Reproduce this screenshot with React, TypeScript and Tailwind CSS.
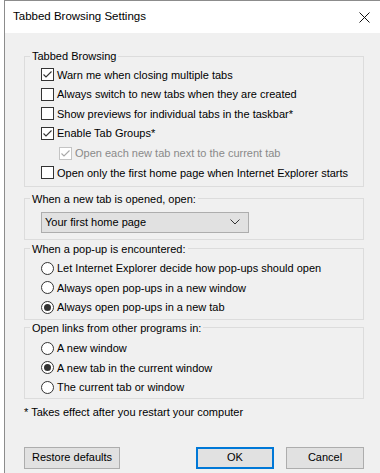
import { type FC } from "react";

const CheckBox: FC<{ checked?: boolean; disabled?: boolean }> = ({ checked, disabled }) => (
  <span
    className={`flex h-[13px] w-[13px] shrink-0 items-center justify-center border bg-white ${
      disabled ? "border-[#c4c4c4]" : "border-[#333333]"
    }`}
  >
    {checked && (
      <svg width="11" height="11" viewBox="0 0 11 11" fill="none">
        <path
          d="M1.5 5.5 L4 8 L9.5 2.5"
          stroke={disabled ? "#a8a8a8" : "#333333"}
          strokeWidth="1.1"
        />
      </svg>
    )}
  </span>
);

const Radio: FC<{ checked?: boolean }> = ({ checked }) => (
  <span className="flex h-[13px] w-[13px] shrink-0 items-center justify-center rounded-full border border-[#333333] bg-white">
    {checked && <span className="h-[7px] w-[7px] rounded-full bg-[#333333]" />}
  </span>
);

const CheckRow: FC<{ label: string; checked?: boolean; disabled?: boolean; indent?: boolean }> = ({
  label,
  checked,
  disabled,
  indent,
}) => (
  <div className={`flex h-[19.6px] items-center gap-[3px] ${indent ? "ml-[29px]" : "ml-[11px]"}`}>
    <CheckBox checked={checked} disabled={disabled} />
    <span className={disabled ? "text-[#8a8a8a]" : ""}>{label}</span>
  </div>
);

const RadioRow: FC<{ label: string; checked?: boolean }> = ({ label, checked }) => (
  <div className="ml-[11px] flex h-[19.5px] items-center gap-[3px]">
    <Radio checked={checked} />
    <span>{label}</span>
  </div>
);

const Legend: FC<{ text: string }> = ({ text }) => (
  <legend className="px-[2px] leading-[16px]">{text}</legend>
);

const Button: FC<{ label: string; primary?: boolean; className?: string }> = ({ label, primary, className }) => (
  <button
    className={`flex h-[22px] items-center justify-center bg-[#e1e1e1] ${
      primary ? "border-2 border-[#0078d7]" : "border border-[#adadad]"
    } ${className ?? ""}`}
  >
    {label}
  </button>
);

export default function App() {
  return (
    <div className="h-[473px] w-[380px] overflow-hidden bg-white font-['Liberation_Sans',Arial,sans-serif] text-[11px] text-black">
      <div className="ml-[4px] flex h-full flex-col border-l border-t border-[#8c8c8c]">
        <div className="flex h-[32px] shrink-0 items-center justify-between bg-white pl-[8px] pr-[10px]">
          <span className="text-[11.5px]">Tabbed Browsing Settings</span>
          <svg width="11" height="11" viewBox="0 0 11 11" fill="none">
            <path d="M0.5 0.5 L10.5 10.5 M10.5 0.5 L0.5 10.5" stroke="#111111" strokeWidth="1" />
          </svg>
        </div>

        <div className="flex flex-1 flex-col bg-[#f0f0f0] pl-[19px] pr-[16px] pt-[15px]">
          <fieldset className="border border-[#dcdcdc] px-[5px] pb-[3px] pt-[1px]">
            <Legend text="Tabbed Browsing" />
            <CheckRow label="Warn me when closing multiple tabs" checked />
            <CheckRow label="Always switch to new tabs when they are created" />
            <CheckRow label="Show previews for individual tabs in the taskbar*" />
            <CheckRow label="Enable Tab Groups*" checked />
            <CheckRow label="Open each new tab next to the current tab" checked disabled indent />
            <CheckRow label="Open only the first home page when Internet Explorer starts" />
          </fieldset>

          <fieldset className="mt-[4px] border border-[#dcdcdc] px-[5px] pb-[6px] pt-[5px]">
            <Legend text="When a new tab is opened, open:" />
            <div className="ml-[11px] flex h-[21px] w-[208px] items-center justify-between border border-[#adadad] bg-[#e1e1e1] pl-[3px] pr-[8px]">
              <span>Your first home page</span>
              <svg width="10" height="6" viewBox="0 0 10 6" fill="none">
                <path d="M0.5 0.5 L5 5 L9.5 0.5" stroke="#333333" strokeWidth="1" />
              </svg>
            </div>
          </fieldset>

          <fieldset className="mt-[1px] border border-[#dcdcdc] px-[5px] pb-[1.5px] pt-[2px]">
            <Legend text="When a pop-up is encountered:" />
            <RadioRow label="Let Internet Explorer decide how pop-ups should open" />
            <RadioRow label="Always open pop-ups in a new window" />
            <RadioRow label="Always open pop-ups in a new tab" checked />
          </fieldset>

          <fieldset className="border border-[#dcdcdc] px-[5px] pb-[0.5px] pt-[3px]">
            <Legend text="Open links from other programs in:" />
            <RadioRow label="A new window" />
            <RadioRow label="A new tab in the current window" checked />
            <RadioRow label="The current tab or window" />
          </fieldset>

          <p className="mt-[5px] leading-[16px]">* Takes effect after you restart your computer</p>

          <div className="mt-[27px] flex items-center justify-between">
            <Button label="Restore defaults" className="w-[96px]" />
            <div className="flex gap-[12px]">
              <Button label="OK" primary className="w-[78px]" />
              <Button label="Cancel" className="w-[78px]" />
            </div>
          </div>
        </div>
      </div>
    </div>
  );
}
